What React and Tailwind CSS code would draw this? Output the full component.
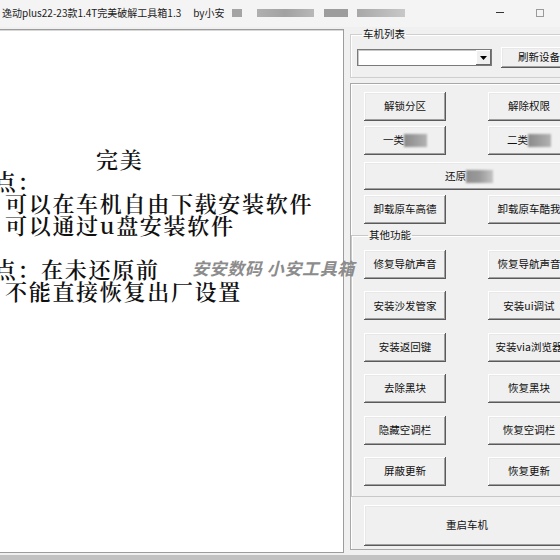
import React from "react";

const FONT = { fontFamily: '"Noto Sans CJK SC", "Noto Sans", sans-serif' };
const SERIF = { fontFamily: '"Noto Serif CJK SC", "Liberation Serif", "Noto Sans CJK SC", serif' };

const btn =
  "flex items-center justify-center bg-[#f0f0f0] text-[10.5px] leading-none text-[#111] whitespace-nowrap shadow-[inset_-1px_-1px_0_#5a5a5a,inset_1px_1px_0_#ffffff,inset_-2px_-2px_0_#a0a0a0,inset_2px_2px_0_#e8e8e8]";

function Blur({ light = false }) {
  return (
    <span
      className={
        light
          ? "inline-block h-[13px] w-[27px] blur-[0.8px] bg-linear-to-r from-[#8e8e8e] via-[#9a9a9a] to-[#c4c4c4]"
          : "inline-block h-[13px] w-[23px] blur-[0.8px] bg-linear-to-r from-[#8a8a8a] to-[#b2b2b2]"
      }
    />
  );
}

function Btn({ children, className = "" }) {
  return <div className={`${btn} h-[29px] ${className}`}>{children}</div>;
}

export default function App() {
  return (
    <div
      className="relative flex h-[560px] w-[560px] flex-col overflow-hidden bg-[#f0f0f0]"
      style={FONT}
    >
      {/* Title bar */}
      <div className="flex h-[27px] shrink-0 items-center bg-[#f4f4f4] pb-[2px]">
        <span className="whitespace-nowrap pl-[2px] text-[10px] text-[#1b1b1b]">
          逸动plus22-23款1.4T完美破解工具箱1.3
        </span>
        <span className="ml-[12px] whitespace-nowrap text-[10px] text-[#1b1b1b]">by小安</span>
        <div className="ml-[7px] flex items-center">
          <span className="h-[8px] w-[10px] bg-[#a4a4a4] blur-[0.6px]" />
          <span className="ml-[15px] h-[8px] w-[57px] bg-linear-to-r from-[#b0b0b0] via-[#a2a2a2] to-[#b8b8b8] blur-[0.6px]" />
          <span className="ml-[10px] h-[8px] w-[24px] bg-[#9d9d9d] blur-[0.6px]" />
          <span className="ml-[9px] h-[8px] w-[48px] bg-linear-to-r from-[#a8a8a8] to-[#c8c8c8] blur-[0.6px]" />
        </div>
        <div className="ml-auto flex items-center">
          <span className="h-[1px] w-[8px] bg-[#333]" />
          <span className="ml-[32px] mr-[16px] h-[8px] w-[8px] border border-[#9a9a9a]" />
        </div>
      </div>

      {/* Body */}
      <div className="flex min-h-0 flex-1">
        {/* Text area */}
        <div
          className="mb-[2px] ml-[-2px] mt-[2px] w-[346px] shrink-0 overflow-hidden border border-[#9c9c9c] bg-white shadow-[inset_1px_1px_0_#d8d8d8]"
          style={SERIF}
        >
          <div className="ml-[-29px] pt-[118px] text-[22px] font-semibold leading-[22px] tracking-[1.7px] text-[#111] whitespace-nowrap">
            <div className="pl-[126px]">完美</div>
            <div>优点：</div>
            <div className="pl-[35px]">可以在车机自由下载安装软件</div>
            <div className="pl-[35px]">可以通过u盘安装软件</div>
            <div>&nbsp;</div>
            <div>缺点：在未还原前</div>
            <div className="pl-[35px]">不能直接恢复出厂设置</div>
          </div>
        </div>

        {/* Right column */}
        <div className="ml-[6px] flex w-[234px] shrink-0 flex-col">
          {/* 车机列表 */}
          <fieldset className="mt-[0px] border border-[#cfcfcf] pb-[9px] pl-[6px] shadow-[inset_1px_1px_0_#ffffff]">
            <legend className="ml-[5px] px-[1px] text-[10.5px] leading-[14px] text-[#111]">车机列表</legend>
            <div className="mt-[6px] flex items-center">
              <div className="flex h-[17px] w-[135px] items-stretch border border-[#7a7a7a] bg-white shadow-[inset_1px_1px_0_#c8c8c8]">
                <div className="flex-1" />
                <div className="flex w-[15px] items-center justify-center bg-[#f0f0f0] shadow-[inset_-1px_-1px_0_#696969,inset_1px_1px_0_#ffffff]">
                  <svg width="7" height="4" viewBox="0 0 7 4">
                    <path d="M0 0 H7 L3.5 4 Z" fill="#000" />
                  </svg>
                </div>
              </div>
              <div className={`${btn} ml-[9px] h-[21px] w-[76px]`}>刷新设备</div>
            </div>
          </fieldset>

          {/* main panel */}
          <div className="mt-[5px] flex flex-col border border-[#a8a8a8] shadow-[inset_1px_1px_0_#ffffff]">
            <div className="grid grid-cols-[82px_82px] gap-x-[42px] pl-[13px] pt-[8px]">
              <Btn>解锁分区</Btn>
              <Btn>解除权限</Btn>
              <Btn className="mt-[5px]">
                一类<Blur />
              </Btn>
              <Btn className="mt-[5px]">
                二类<Blur />
              </Btn>
              <div className={`${btn} col-span-2 mt-[7px] h-[28px] pl-[4px]`}>
                还原<Blur light />
              </div>
              <Btn className="mt-[5px]">卸载原车高德</Btn>
              <Btn className="mt-[5px]">卸载原车酷我</Btn>
            </div>

            <fieldset className="mt-[4px] border border-[#c8c8c8] pb-[10px] pl-[12px] shadow-[inset_1px_1px_0_#ffffff]">
              <legend className="ml-[4px] px-[1px] text-[10.5px] leading-[14px] text-[#111]">其他功能</legend>
              <div className="mt-[8px] grid grid-cols-[82px_82px] gap-x-[42px] gap-y-[12.4px]">
                <Btn>修复导航声音</Btn>
                <Btn>恢复导航声音</Btn>
                <Btn>安装沙发管家</Btn>
                <Btn>安装ui调试</Btn>
                <Btn>安装返回键</Btn>
                <Btn>安装via浏览器</Btn>
                <Btn>去除黑块</Btn>
                <Btn>恢复黑块</Btn>
                <Btn>隐藏空调栏</Btn>
                <Btn>恢复空调栏</Btn>
                <Btn>屏蔽更新</Btn>
                <Btn>恢复更新</Btn>
              </div>
            </fieldset>

            <div className="pb-[3px] pl-[13px] pt-[8px]">
              <div className={`${btn} h-[41px] w-[206px]`}>重启车机</div>
            </div>
          </div>
        </div>
      </div>

      {/* bottom edge */}
      <div className="h-[5px] shrink-0 bg-[#c2c2c2]" />

      {/* watermark */}
      <div className="pointer-events-none absolute left-[192px] top-[258px] whitespace-nowrap text-[17px] font-bold italic leading-[20px] tracking-[0.6px] text-[#8c8c8c]">
        安安数码 小安工具箱
      </div>
    </div>
  );
}
